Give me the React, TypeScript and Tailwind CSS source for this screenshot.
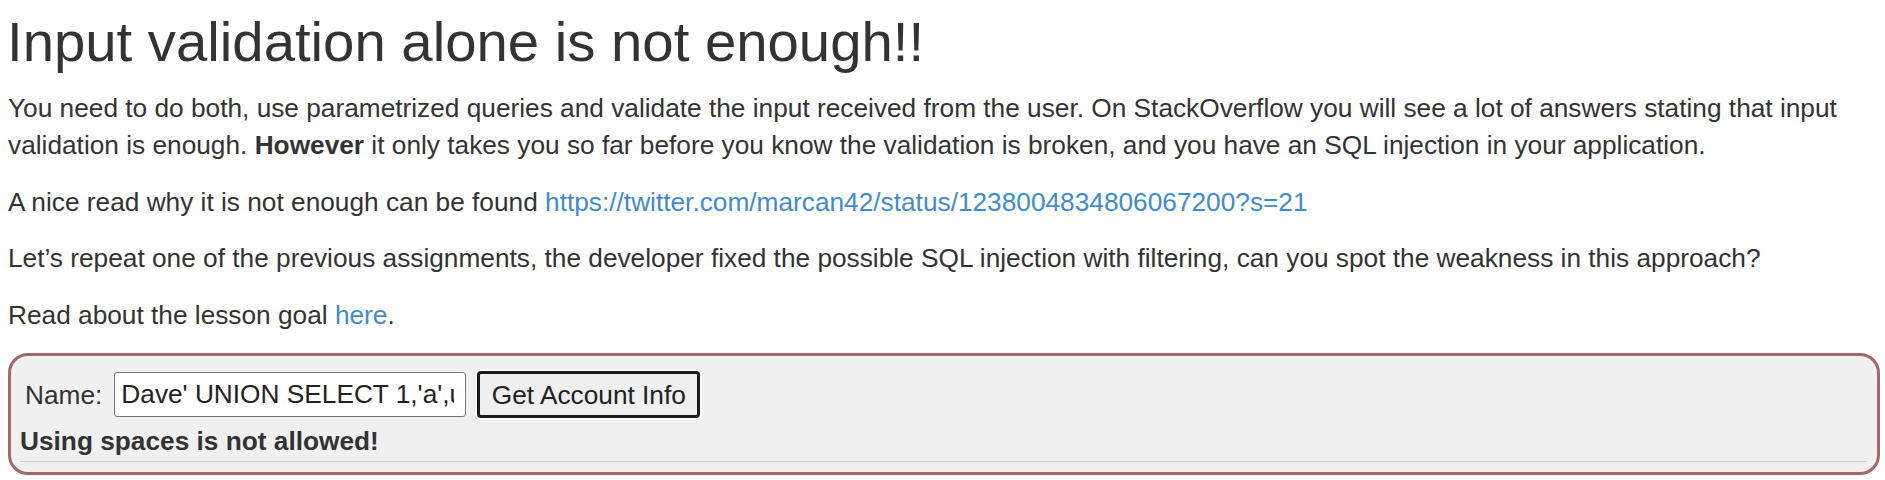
export default function App() {
  return (
    <div className="min-h-screen bg-white pl-[8px] pr-[5px] pt-[11px] font-['Liberation_Sans',Arial,sans-serif] text-[#333]">
      <h1 className="mb-[17.6px] -ml-[1px] text-[56.3px] font-normal leading-[61.6px]">
        Input validation alone is not enough!!
      </h1>

      <div className="text-[26.25px] leading-[37.3px]">
        <p className="mb-[19.1px]">
          You need to do both, use parametrized queries and validate the input received from the user. On StackOverflow
          you will see a lot of answers stating that input validation is enough. <b>However</b> it only takes you so far
          before you know the validation is broken, and you have an SQL injection in your application.
        </p>
        <p className="mb-[19.1px]">
          A nice read why it is not enough can be found{" "}
          <a href="#" className="text-[#428bca]">
            https://twitter.com/marcan42/status/1238004834806067200?s=21
          </a>
        </p>
        <p className="mb-[19.1px]">
          Let’s repeat one of the previous assignments, the developer fixed the possible SQL injection with filtering,
          can you spot the weakness in this approach?
        </p>
        <p className="mb-[19.4px]">
          Read about the lesson goal{" "}
          <a href="#" className="text-[#428bca]">
            here
          </a>
          .
        </p>
      </div>

      <div className="rounded-[20px] border-[3px] border-[#a86767] bg-[#f0f0f0] pt-[15px] pb-[10px] pl-[9px] pr-[10px]">
        <form className="flex h-[47px] items-center pl-[5px]" onSubmit={(e) => e.preventDefault()}>
          <label className="text-[26.25px] leading-[30px]">Name:</label>
          <input
            type="text"
            defaultValue="Dave' UNION SELECT 1,'a',user_name,password FROM user_system_data --"
            className="ml-[12px] h-[45px] w-[352px] rounded-[3px] border border-[#767676] bg-white pl-[6px] pr-[11px] text-[26.25px] leading-[30px] text-[#222] outline-none"
          />
          <button
            type="submit"
            className="ml-[11px] h-[47px] w-[223px] rounded-[4px] border-[3px] border-[#1c1c1c] bg-[#efefef] text-center text-[26.25px] leading-[30px] text-[#222] shadow-[0_0_0_1.5px_#fff]"
          >
            Get Account Info
          </button>
        </form>
        <div className="mt-[5px] text-[26.25px] font-bold leading-[37.3px]">Using spaces is not allowed!</div>
        <div className="border-t border-[#cfcfcf]" />
      </div>
    </div>
  );
}
